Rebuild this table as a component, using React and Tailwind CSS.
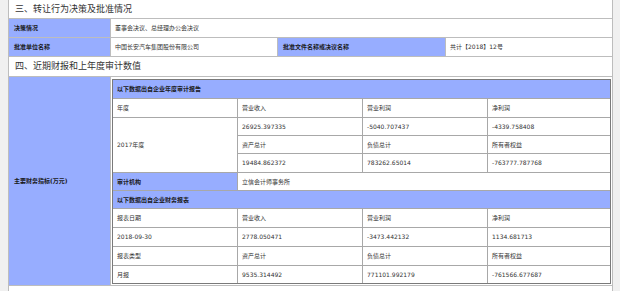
import React from "react";

const FONT = { fontFamily: '"DejaVu Sans","Noto Sans CJK SC",sans-serif' };

function Cell({ children, blue, bold, span, className = "" }) {
  return (
    <div
      className={`flex items-center pl-[4px] whitespace-nowrap overflow-hidden ${
        blue ? "bg-[#97adff]" : "bg-white"
      } ${bold ? "font-bold text-[#1a1a1a]" : "text-[#333]"} ${span || ""} ${className}`}
    >
      {children}
    </div>
  );
}

export default function App() {
  return (
    <div className="min-h-screen bg-[#f0f0f0] pl-[8px] text-[6px] leading-none" style={FONT}>
      <div className="w-[605px] border-x border-[#bdbdbd] bg-white">
        {/* title 1 */}
        <div className="h-[19px] border-b border-[#bdbdbd] flex items-center pl-[6px] text-[9px] text-[#333]">
          三、转让行为决策及批准情况
        </div>
        <div className="h-[19px] border-b border-[#bdbdbd] flex">
          <div className="w-[102px] border-r border-[#bdbdbd] bg-[#97adff] flex items-center pl-[5px] font-bold text-[#1a1a1a]">
            决策情况
          </div>
          <div className="flex-1 flex items-center pl-[4px] text-[#333]">董事会决议、总经理办公会决议</div>
        </div>
        <div className="h-[19px] border-b border-[#bdbdbd] flex">
          <div className="w-[102px] border-r border-[#bdbdbd] bg-[#97adff] flex items-center pl-[5px] font-bold text-[#1a1a1a]">
            批准单位名称
          </div>
          <div className="w-[167px] border-r border-[#bdbdbd] flex items-center pl-[4px] text-[#333]">
            中国长安汽车集团股份有限公司
          </div>
          <div className="w-[168px] border-r border-[#bdbdbd] bg-[#97adff] flex items-center pl-[5px] font-bold text-[#1a1a1a]">
            批准文件名称或决议名称
          </div>
          <div className="flex-1 flex items-center pl-[4px] text-[#333]">共计【2018】12号</div>
        </div>
        {/* title 2 */}
        <div className="h-[20px] border-b border-[#bdbdbd] flex items-center pl-[6px] text-[9px] text-[#333]">
          四、近期财报和上年度审计数值
        </div>
        <div className="h-[209px] border-b border-[#bdbdbd] flex">
          <div className="w-[102px] border-r border-[#bdbdbd] bg-[#97adff] flex items-center pl-[5px] font-bold text-[#1a1a1a]">
            主要财务指标(万元)
          </div>
          <div className="flex-1 pt-[2px] pl-[1px] pr-[1px] pb-[1px]">
            <div className="border border-[#7a7a7a] bg-[#a8a8a8] grid grid-cols-[124px_124px_124px_122px] grid-rows-[18px_18px_17px_17px_18px_17px_17px_18px_18px_18px_17px] gap-px">
              <Cell blue bold span="col-span-4">以下数据出自企业年度审计报告</Cell>
              <Cell>年度</Cell>
              <Cell>营业收入</Cell>
              <Cell>营业利润</Cell>
              <Cell>净利润</Cell>
              <Cell span="row-span-3">2017年度</Cell>
              <Cell>26925.397335</Cell>
              <Cell>-5040.707437</Cell>
              <Cell>-4339.758408</Cell>
              <Cell>资产总计</Cell>
              <Cell>负债总计</Cell>
              <Cell>所有者权益</Cell>
              <Cell>19484.862372</Cell>
              <Cell>783262.65014</Cell>
              <Cell>-763777.787768</Cell>
              <Cell blue bold>审计机构</Cell>
              <Cell span="col-span-3">立信会计师事务所</Cell>
              <Cell blue bold span="col-span-4">以下数据出自企业财务报表</Cell>
              <Cell>报表日期</Cell>
              <Cell>营业收入</Cell>
              <Cell>营业利润</Cell>
              <Cell>净利润</Cell>
              <Cell>2018-09-30</Cell>
              <Cell>2778.050471</Cell>
              <Cell>-3473.442132</Cell>
              <Cell>1134.681713</Cell>
              <Cell>报表类型</Cell>
              <Cell>资产总计</Cell>
              <Cell>负债总计</Cell>
              <Cell>所有者权益</Cell>
              <Cell>月报</Cell>
              <Cell>9535.314492</Cell>
              <Cell>771101.992179</Cell>
              <Cell>-761566.677687</Cell>
            </div>
          </div>
        </div>
        <div className="h-[10px]" />
      </div>
    </div>
  );
}
